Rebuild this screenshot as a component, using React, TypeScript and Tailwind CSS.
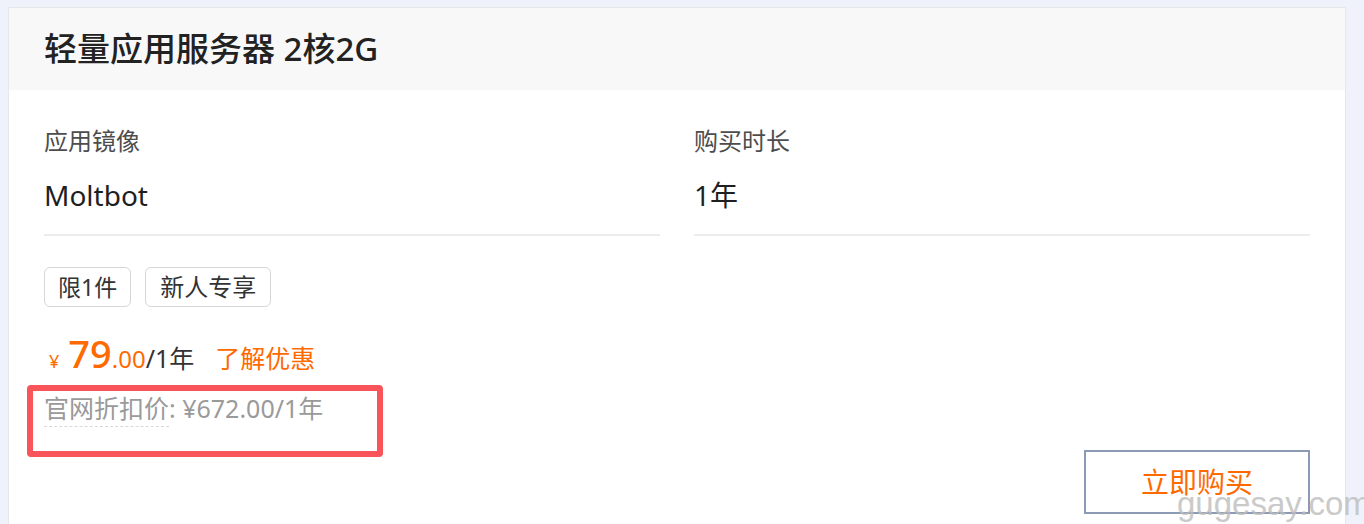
import React from "react";

export default function App() {
  return (
    <div className="relative w-[1364px] h-[524px] overflow-hidden bg-[#eff2fb] font-['Noto_Sans','Noto_Sans_CJK_SC',sans-serif]">
      <div className="ml-[8px] mt-[7px] w-[1338px] min-h-[560px] border border-[#e6e7ea] bg-white">
        {/* header */}
        <div className="h-[82px] bg-[#f8f8f8] px-[35px] flex items-center">
          <h1 className="text-[33px] leading-[40px] font-medium text-[#222]">轻量应用服务器 2核2G</h1>
        </div>

        {/* body */}
        <div className="px-[35px] pt-[35px]">
          <div className="grid grid-cols-2 gap-x-[34px]">
            <div>
              <div className="text-[24px] leading-[32px] text-[#4d4d4d]">应用镜像</div>
              <div className="mt-[20px] text-[28px] leading-[36px] text-[#1f1f1f]">Moltbot</div>
              <div className="mt-[21px] h-[2px] bg-[#ececec]" />
            </div>
            <div>
              <div className="text-[24px] leading-[32px] text-[#4d4d4d]">购买时长</div>
              <div className="mt-[20px] text-[28px] leading-[36px] text-[#1f1f1f]">1年</div>
              <div className="mt-[21px] h-[2px] bg-[#ececec]" />
            </div>
          </div>

          {/* tags */}
          <div className="mt-[31px] flex gap-[14px]">
            <span className="h-[40px] px-[13px] flex items-center rounded-[6px] border border-[#d6d6d6] text-[23px] text-[#333]">限1件</span>
            <span className="h-[40px] px-[14px] flex items-center rounded-[6px] border border-[#d6d6d6] text-[24px] text-[#333]">新人专享</span>
          </div>

          {/* price */}
          <div className="mt-[27px] flex items-baseline">
            <span className="ml-[5px] text-[18px] leading-none text-[#ff6a00]">¥</span>
            <span className="ml-[9px] text-[38px] leading-none font-medium text-[#ff6a00]">79</span>
            <span className="text-[24px] leading-none text-[#ff6a00]">.00</span>
            <span className="text-[25px] leading-none text-[#333]">/1年</span>
            <span className="ml-[21px] text-[25px] leading-none text-[#ff6a00]">了解优惠</span>
          </div>

          {/* official price */}
          <div className="relative mt-[21px] flex items-start text-[25px] leading-[30px] text-[#9a9a9a]">
            <span className="pb-[3px] border-b border-dashed border-[#d9d9d9]">官网折扣价</span>
            <span>: ¥672.00/1年</span>
            <div className="absolute left-[-17px] top-[-8px] w-[356px] h-[72px] border-[6px] border-[#f9545a] rounded-[4px]" />
          </div>

          {/* buy button */}
          <div className="mt-[23px] flex justify-end">
            <button className="w-[226px] h-[64px] border-2 border-[#8c9ab4] bg-white text-[28px] text-[#ff6a00]">立即购买</button>
          </div>
        </div>
      </div>

      <div className="absolute left-[1177px] top-[487px] text-[33px] leading-none font-['Liberation_Sans',sans-serif] text-[#bdbdbd] opacity-80">gugesay.com</div>
    </div>
  );
}
